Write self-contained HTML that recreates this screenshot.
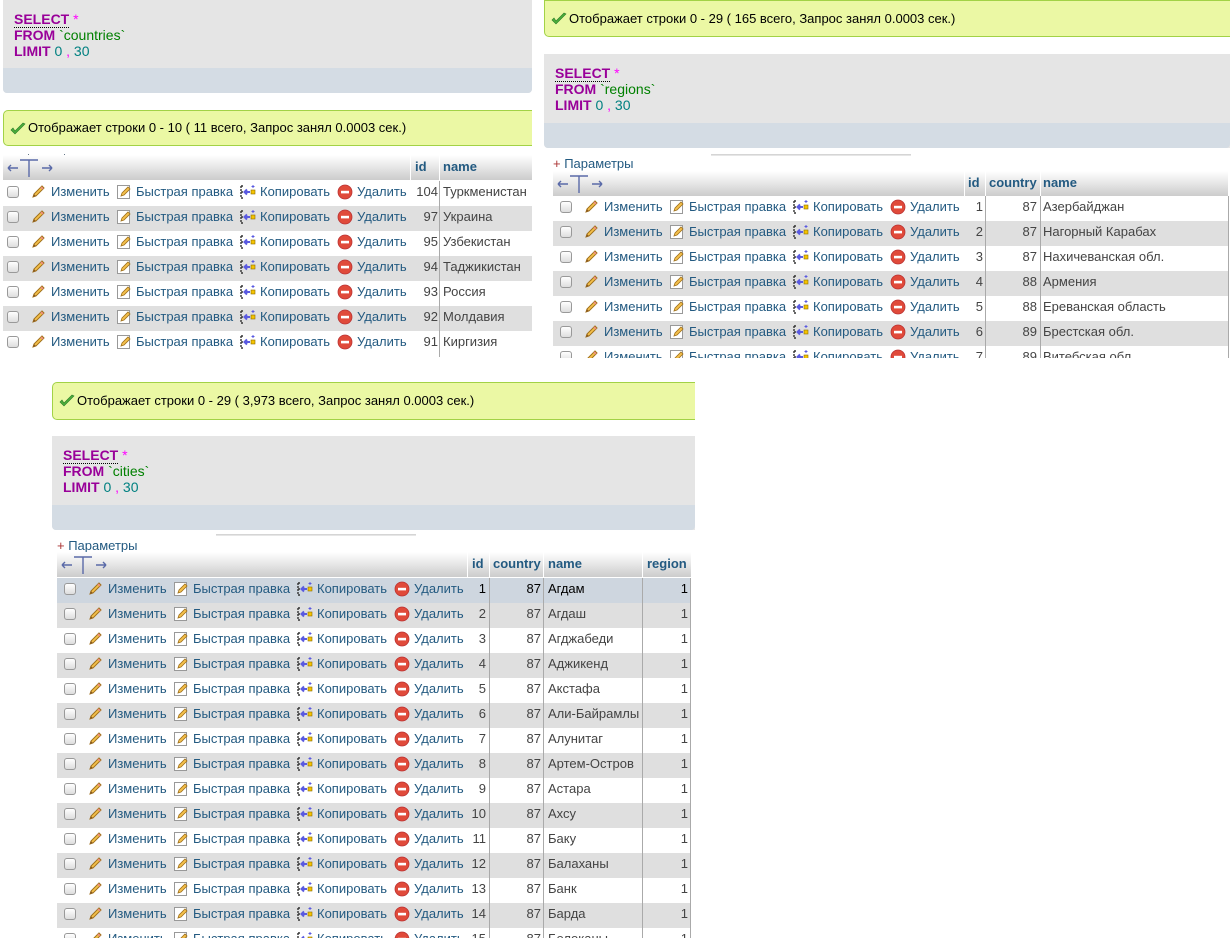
<!DOCTYPE html>
<html><head><meta charset="utf-8">
<style>
*{margin:0;padding:0;box-sizing:border-box}
body{width:1230px;height:938px;position:relative;overflow:hidden;background:#fff;font-family:"Liberation Sans",sans-serif;font-size:13px;color:#444}
.abs{position:absolute}
.clip{position:absolute;overflow:hidden}
.ok{position:absolute;background:#ebf8a4;border:1px solid #a2d246;border-radius:5px;color:#000;font-size:13px;padding-left:24px;line-height:34px}
.ok svg{position:absolute;left:6px;top:11px}
.sql{position:absolute;background:#e5e5e5;border-radius:0 0 4px 4px;font-size:14px;line-height:16px}
.sql .bot{position:absolute;left:0;right:0;bottom:0;height:25px;background:#d4dce4;border-radius:0 0 4px 4px}
.kw{color:#990099;font-weight:bold}
.st{color:#ff00ff}
.tb{color:#008000}
.nu{color:#008080}
.sel{border-bottom:1px dotted #000}
.hdr{position:absolute;height:25px;background:linear-gradient(#fff,#ccc)}
.hdr b{position:absolute;top:4px;color:#235a81;font-weight:bold}
.hdr .sep{position:absolute;top:0;bottom:0;width:1px;background:#fff}
.arr{position:absolute;left:3px;top:2px}
.row{position:absolute;height:25px;line-height:25px;white-space:nowrap}
.row.g{background:#dfdfdf}
.row.h{background:#ced6df}
.row span{position:absolute;top:-2px}
.lk{color:#235a81}
.cb{position:absolute;top:5px;width:12px;height:12px;border:1px solid #999;border-radius:3px;background:linear-gradient(#fff,#ddd)}
.row svg{position:absolute;top:3px}
.vl{position:absolute;top:0;bottom:0;width:1px;background:#aaa}
.num{text-align:right}
.par{position:absolute;color:#235a81}
.par i{color:#a33;font-style:normal}
.line{position:absolute;height:2px;background:linear-gradient(#ccc,#eee)}
</style></head><body>
<svg width="0" height="0" style="position:absolute">
<defs>
<symbol id="pen" viewBox="0 0 16 16"><path d="M3 13 L4 10 L12 2 L14 4 L6 12 Z" fill="#f4c04c" stroke="#a0701a" stroke-width="1"/><path d="M3 13 L4 10 L6 12 Z" fill="#8a5a20"/><path d="M11 3 L13 5" stroke="#e88" stroke-width="1.5"/></symbol>
<symbol id="qe" viewBox="0 0 16 16"><rect x="1.5" y="1.5" width="12" height="13" fill="#fff" stroke="#999"/><path d="M5 12 L6 9 L12 3 L14 5 L8 11 Z" fill="#f4c04c" stroke="#a0701a" stroke-width=".8"/></symbol>
<symbol id="cp" viewBox="0 0 16 16"><path d="M1 2 H4 M1 2 V14 H4 M1 8 H3" stroke="#333" stroke-width="1.4" fill="none" stroke-dasharray="2 1"/><path d="M10 8 H5 M7 5.5 L4.5 8 L7 10.5" stroke="#5a5ae0" stroke-width="2" fill="none"/><rect x="11" y="6" width="4" height="4" fill="#f5c400" stroke="#8a6a00" stroke-width=".6"/><path d="M13 1 V4 M11.5 2.5 H14.5" stroke="#5a5ae0" stroke-width="1"/></symbol>
<symbol id="dl" viewBox="0 0 16 16"><circle cx="8" cy="8" r="7" fill="#e04a3a" stroke="#b33" stroke-width=".8"/><rect x="4" y="6.8" width="8" height="2.6" fill="#fff"/></symbol>
<symbol id="ck" viewBox="0 0 16 14"><path d="M1 8 L5 12 L15 2 L13 1 L5 9 L3 6 Z" fill="#4caf3a" stroke="#2a7a2a" stroke-width=".6"/></symbol>
<symbol id="ar" viewBox="0 0 48 22"><path d="M2 11 H12 M2 11 L5 8 M2 11 L5 14 M36 11 H46 M46 11 L43 8 M46 11 L43 14 M14 3 H32 M23 3 V20" stroke="#5a6aa8" stroke-width="1.4" fill="none"/></symbol>
</defs></svg>

<!-- ================= PANEL A (countries) ================= -->
<div class="sql" style="left:3px;top:0;width:529px;height:93px;padding:11px 0 0 11px"><div class="bot"></div>
<div style="position:relative"><span class="kw sel">SELECT</span> <span class="st">*</span><br><span class="kw">FROM</span> <span class="tb">`countries`</span><br><span class="kw">LIMIT</span> <span class="nu">0</span> <span class="st">,</span> <span class="nu">30</span></div></div>
<div class="ok" style="left:3px;top:110px;width:540px;height:36px"><svg width="16" height="14"><use href="#ck"/></svg>Отображает строки 0 - 10 ( 11 всего, Запрос занял 0.0003 сек.)</div>
<div class="abs" style="left:28px;top:154px;width:1px;height:4px;background:#678"></div>
<div class="abs" style="left:64px;top:154px;width:1px;height:4px;background:#678"></div>
<div class="hdr" style="left:3px;top:155px;width:529px"><svg class="arr" width="48" height="22"><use href="#ar"/></svg>
<div class="sep" style="left:407px"></div><b style="left:412px">id</b><div class="sep" style="left:436px"></div><b style="left:440px">name</b></div>
<div class="clip" style="left:3px;top:181px;width:529px;height:176px">
<div class="row" style="top:0;width:529px"><div class="cb" style="left:4px"></div><svg style="left:27px" width="16" height="16"><use href="#pen"/></svg><span class="lk" style="left:48px">Изменить</span><svg style="left:113px" width="16" height="16"><use href="#qe"/></svg><span class="lk" style="left:133px">Быстрая правка</span><svg style="left:237px" width="16" height="16"><use href="#cp"/></svg><span class="lk" style="left:257px">Копировать</span><svg style="left:334px" width="16" height="16"><use href="#dl"/></svg><span class="lk" style="left:354px">Удалить</span><span class="num" style="left:408px;width:27px">104</span><span style="left:440px">Туркменистан</span></div>
<div class="row g" style="top:25px;width:529px"><div class="cb" style="left:4px"></div><svg style="left:27px" width="16" height="16"><use href="#pen"/></svg><span class="lk" style="left:48px">Изменить</span><svg style="left:113px" width="16" height="16"><use href="#qe"/></svg><span class="lk" style="left:133px">Быстрая правка</span><svg style="left:237px" width="16" height="16"><use href="#cp"/></svg><span class="lk" style="left:257px">Копировать</span><svg style="left:334px" width="16" height="16"><use href="#dl"/></svg><span class="lk" style="left:354px">Удалить</span><span class="num" style="left:408px;width:27px">97</span><span style="left:440px">Украина</span></div>
<div class="row" style="top:50px;width:529px"><div class="cb" style="left:4px"></div><svg style="left:27px" width="16" height="16"><use href="#pen"/></svg><span class="lk" style="left:48px">Изменить</span><svg style="left:113px" width="16" height="16"><use href="#qe"/></svg><span class="lk" style="left:133px">Быстрая правка</span><svg style="left:237px" width="16" height="16"><use href="#cp"/></svg><span class="lk" style="left:257px">Копировать</span><svg style="left:334px" width="16" height="16"><use href="#dl"/></svg><span class="lk" style="left:354px">Удалить</span><span class="num" style="left:408px;width:27px">95</span><span style="left:440px">Узбекистан</span></div>
<div class="row g" style="top:75px;width:529px"><div class="cb" style="left:4px"></div><svg style="left:27px" width="16" height="16"><use href="#pen"/></svg><span class="lk" style="left:48px">Изменить</span><svg style="left:113px" width="16" height="16"><use href="#qe"/></svg><span class="lk" style="left:133px">Быстрая правка</span><svg style="left:237px" width="16" height="16"><use href="#cp"/></svg><span class="lk" style="left:257px">Копировать</span><svg style="left:334px" width="16" height="16"><use href="#dl"/></svg><span class="lk" style="left:354px">Удалить</span><span class="num" style="left:408px;width:27px">94</span><span style="left:440px">Таджикистан</span></div>
<div class="row" style="top:100px;width:529px"><div class="cb" style="left:4px"></div><svg style="left:27px" width="16" height="16"><use href="#pen"/></svg><span class="lk" style="left:48px">Изменить</span><svg style="left:113px" width="16" height="16"><use href="#qe"/></svg><span class="lk" style="left:133px">Быстрая правка</span><svg style="left:237px" width="16" height="16"><use href="#cp"/></svg><span class="lk" style="left:257px">Копировать</span><svg style="left:334px" width="16" height="16"><use href="#dl"/></svg><span class="lk" style="left:354px">Удалить</span><span class="num" style="left:408px;width:27px">93</span><span style="left:440px">Россия</span></div>
<div class="row g" style="top:125px;width:529px"><div class="cb" style="left:4px"></div><svg style="left:27px" width="16" height="16"><use href="#pen"/></svg><span class="lk" style="left:48px">Изменить</span><svg style="left:113px" width="16" height="16"><use href="#qe"/></svg><span class="lk" style="left:133px">Быстрая правка</span><svg style="left:237px" width="16" height="16"><use href="#cp"/></svg><span class="lk" style="left:257px">Копировать</span><svg style="left:334px" width="16" height="16"><use href="#dl"/></svg><span class="lk" style="left:354px">Удалить</span><span class="num" style="left:408px;width:27px">92</span><span style="left:440px">Молдавия</span></div>
<div class="row" style="top:150px;width:529px"><div class="cb" style="left:4px"></div><svg style="left:27px" width="16" height="16"><use href="#pen"/></svg><span class="lk" style="left:48px">Изменить</span><svg style="left:113px" width="16" height="16"><use href="#qe"/></svg><span class="lk" style="left:133px">Быстрая правка</span><svg style="left:237px" width="16" height="16"><use href="#cp"/></svg><span class="lk" style="left:257px">Копировать</span><svg style="left:334px" width="16" height="16"><use href="#dl"/></svg><span class="lk" style="left:354px">Удалить</span><span class="num" style="left:408px;width:27px">91</span><span style="left:440px">Киргизия</span></div>
<div class="vl" style="left:436px;top:0;height:176px"></div>
</div>
<div class="abs" style="left:532px;top:0;width:12px;height:360px;background:#fff"></div>

<!-- ================= PANEL B (regions) ================= -->
<div class="ok" style="left:544px;top:0;width:690px;height:37px;border-radius:0 0 0 5px;line-height:35px"><svg width="16" height="14"><use href="#ck"/></svg>Отображает строки 0 - 29 ( 165 всего, Запрос занял 0.0003 сек.)</div>
<div class="sql" style="left:544px;top:54px;width:686px;height:94px;padding:11px 0 0 11px;border-radius:0 0 0 4px"><div class="bot"></div>
<div style="position:relative"><span class="kw sel">SELECT</span> <span class="st">*</span><br><span class="kw">FROM</span> <span class="tb">`regions`</span><br><span class="kw">LIMIT</span> <span class="nu">0</span> <span class="st">,</span> <span class="nu">30</span></div></div>
<div class="line" style="left:711px;top:154px;width:200px"></div>
<div class="par" style="left:553px;top:156px"><i>+</i> Параметры</div>
<div class="hdr" style="left:553px;top:171px;width:675px"><svg class="arr" width="48" height="22"><use href="#ar"/></svg>
<div class="sep" style="left:411px"></div><b style="left:415px">id</b><div class="sep" style="left:432px"></div><b style="left:436px">country</b><div class="sep" style="left:487px"></div><b style="left:490px">name</b></div>
<div class="clip" style="left:553px;top:196px;width:676px;height:162px">
<div class="row" style="top:0;width:676px"><div class="cb" style="left:7px"></div><svg style="left:30px" width="16" height="16"><use href="#pen"/></svg><span class="lk" style="left:51px">Изменить</span><svg style="left:116px" width="16" height="16"><use href="#qe"/></svg><span class="lk" style="left:136px">Быстрая правка</span><svg style="left:240px" width="16" height="16"><use href="#cp"/></svg><span class="lk" style="left:260px">Копировать</span><svg style="left:337px" width="16" height="16"><use href="#dl"/></svg><span class="lk" style="left:357px">Удалить</span><span class="num" style="left:412px;width:18px">1</span><span class="num" style="left:433px;width:51px">87</span><span style="left:490px">Азербайджан</span></div>
<div class="row g" style="top:25px;width:676px"><div class="cb" style="left:7px"></div><svg style="left:30px" width="16" height="16"><use href="#pen"/></svg><span class="lk" style="left:51px">Изменить</span><svg style="left:116px" width="16" height="16"><use href="#qe"/></svg><span class="lk" style="left:136px">Быстрая правка</span><svg style="left:240px" width="16" height="16"><use href="#cp"/></svg><span class="lk" style="left:260px">Копировать</span><svg style="left:337px" width="16" height="16"><use href="#dl"/></svg><span class="lk" style="left:357px">Удалить</span><span class="num" style="left:412px;width:18px">2</span><span class="num" style="left:433px;width:51px">87</span><span style="left:490px">Нагорный Карабах</span></div>
<div class="row" style="top:50px;width:676px"><div class="cb" style="left:7px"></div><svg style="left:30px" width="16" height="16"><use href="#pen"/></svg><span class="lk" style="left:51px">Изменить</span><svg style="left:116px" width="16" height="16"><use href="#qe"/></svg><span class="lk" style="left:136px">Быстрая правка</span><svg style="left:240px" width="16" height="16"><use href="#cp"/></svg><span class="lk" style="left:260px">Копировать</span><svg style="left:337px" width="16" height="16"><use href="#dl"/></svg><span class="lk" style="left:357px">Удалить</span><span class="num" style="left:412px;width:18px">3</span><span class="num" style="left:433px;width:51px">87</span><span style="left:490px">Нахичеванская обл.</span></div>
<div class="row g" style="top:75px;width:676px"><div class="cb" style="left:7px"></div><svg style="left:30px" width="16" height="16"><use href="#pen"/></svg><span class="lk" style="left:51px">Изменить</span><svg style="left:116px" width="16" height="16"><use href="#qe"/></svg><span class="lk" style="left:136px">Быстрая правка</span><svg style="left:240px" width="16" height="16"><use href="#cp"/></svg><span class="lk" style="left:260px">Копировать</span><svg style="left:337px" width="16" height="16"><use href="#dl"/></svg><span class="lk" style="left:357px">Удалить</span><span class="num" style="left:412px;width:18px">4</span><span class="num" style="left:433px;width:51px">88</span><span style="left:490px">Армения</span></div>
<div class="row" style="top:100px;width:676px"><div class="cb" style="left:7px"></div><svg style="left:30px" width="16" height="16"><use href="#pen"/></svg><span class="lk" style="left:51px">Изменить</span><svg style="left:116px" width="16" height="16"><use href="#qe"/></svg><span class="lk" style="left:136px">Быстрая правка</span><svg style="left:240px" width="16" height="16"><use href="#cp"/></svg><span class="lk" style="left:260px">Копировать</span><svg style="left:337px" width="16" height="16"><use href="#dl"/></svg><span class="lk" style="left:357px">Удалить</span><span class="num" style="left:412px;width:18px">5</span><span class="num" style="left:433px;width:51px">88</span><span style="left:490px">Ереванская область</span></div>
<div class="row g" style="top:125px;width:676px"><div class="cb" style="left:7px"></div><svg style="left:30px" width="16" height="16"><use href="#pen"/></svg><span class="lk" style="left:51px">Изменить</span><svg style="left:116px" width="16" height="16"><use href="#qe"/></svg><span class="lk" style="left:136px">Быстрая правка</span><svg style="left:240px" width="16" height="16"><use href="#cp"/></svg><span class="lk" style="left:260px">Копировать</span><svg style="left:337px" width="16" height="16"><use href="#dl"/></svg><span class="lk" style="left:357px">Удалить</span><span class="num" style="left:412px;width:18px">6</span><span class="num" style="left:433px;width:51px">89</span><span style="left:490px">Брестская обл.</span></div>
<div class="row" style="top:150px;width:676px"><div class="cb" style="left:7px"></div><svg style="left:30px" width="16" height="16"><use href="#pen"/></svg><span class="lk" style="left:51px">Изменить</span><svg style="left:116px" width="16" height="16"><use href="#qe"/></svg><span class="lk" style="left:136px">Быстрая правка</span><svg style="left:240px" width="16" height="16"><use href="#cp"/></svg><span class="lk" style="left:260px">Копировать</span><svg style="left:337px" width="16" height="16"><use href="#dl"/></svg><span class="lk" style="left:357px">Удалить</span><span class="num" style="left:412px;width:18px">7</span><span class="num" style="left:433px;width:51px">89</span><span style="left:490px">Витебская обл.</span></div>
<div class="vl" style="left:432px"></div><div class="vl" style="left:487px"></div><div class="vl" style="left:675px"></div>
</div>

<!-- ================= PANEL C (cities) ================= -->
<div class="ok" style="left:52px;top:382px;width:643px;height:38px;border-right:none;border-radius:5px 0 0 5px;line-height:36px"><svg width="16" height="14"><use href="#ck"/></svg>Отображает строки 0 - 29 ( 3,973 всего, Запрос занял 0.0003 сек.)</div>
<div class="sql" style="left:52px;top:436px;width:643px;height:94px;padding:11px 0 0 11px;border-radius:0 0 0 4px"><div class="bot"></div>
<div style="position:relative"><span class="kw sel">SELECT</span> <span class="st">*</span><br><span class="kw">FROM</span> <span class="tb">`cities`</span><br><span class="kw">LIMIT</span> <span class="nu">0</span> <span class="st">,</span> <span class="nu">30</span></div></div>
<div class="line" style="left:216px;top:534px;width:200px"></div>
<div class="par" style="left:57px;top:538px"><i>+</i> Параметры</div>
<div class="hdr" style="left:57px;top:552px;width:634px"><svg class="arr" width="48" height="22"><use href="#ar"/></svg>
<div class="sep" style="left:410px"></div><b style="left:415px">id</b><div class="sep" style="left:432px"></div><b style="left:436px">country</b><div class="sep" style="left:486px"></div><b style="left:491px">name</b><div class="sep" style="left:585px"></div><b style="left:590px">region</b></div>
<div class="clip" style="left:57px;top:578px;width:634px;height:360px">
<div class="row h" style="top:0;width:634px"><div class="cb" style="left:7px"></div><svg style="left:30px" width="16" height="16"><use href="#pen"/></svg><span class="lk" style="left:51px">Изменить</span><svg style="left:116px" width="16" height="16"><use href="#qe"/></svg><span class="lk" style="left:136px">Быстрая правка</span><svg style="left:240px" width="16" height="16"><use href="#cp"/></svg><span class="lk" style="left:260px">Копировать</span><svg style="left:337px" width="16" height="16"><use href="#dl"/></svg><span class="lk" style="left:357px">Удалить</span><span class="num" style="left:411px;width:18px;color:#000">1</span><span class="num" style="left:433px;width:51px;color:#000">87</span><span style="left:491px;color:#000">Агдам</span><span class="num" style="left:586px;width:45px;color:#000">1</span></div>
<div class="row g" style="top:25px;width:634px"><div class="cb" style="left:7px"></div><svg style="left:30px" width="16" height="16"><use href="#pen"/></svg><span class="lk" style="left:51px">Изменить</span><svg style="left:116px" width="16" height="16"><use href="#qe"/></svg><span class="lk" style="left:136px">Быстрая правка</span><svg style="left:240px" width="16" height="16"><use href="#cp"/></svg><span class="lk" style="left:260px">Копировать</span><svg style="left:337px" width="16" height="16"><use href="#dl"/></svg><span class="lk" style="left:357px">Удалить</span><span class="num" style="left:411px;width:18px">2</span><span class="num" style="left:433px;width:51px">87</span><span style="left:491px">Агдаш</span><span class="num" style="left:586px;width:45px">1</span></div>
<div class="row" style="top:50px;width:634px"><div class="cb" style="left:7px"></div><svg style="left:30px" width="16" height="16"><use href="#pen"/></svg><span class="lk" style="left:51px">Изменить</span><svg style="left:116px" width="16" height="16"><use href="#qe"/></svg><span class="lk" style="left:136px">Быстрая правка</span><svg style="left:240px" width="16" height="16"><use href="#cp"/></svg><span class="lk" style="left:260px">Копировать</span><svg style="left:337px" width="16" height="16"><use href="#dl"/></svg><span class="lk" style="left:357px">Удалить</span><span class="num" style="left:411px;width:18px">3</span><span class="num" style="left:433px;width:51px">87</span><span style="left:491px">Агджабеди</span><span class="num" style="left:586px;width:45px">1</span></div>
<div class="row g" style="top:75px;width:634px"><div class="cb" style="left:7px"></div><svg style="left:30px" width="16" height="16"><use href="#pen"/></svg><span class="lk" style="left:51px">Изменить</span><svg style="left:116px" width="16" height="16"><use href="#qe"/></svg><span class="lk" style="left:136px">Быстрая правка</span><svg style="left:240px" width="16" height="16"><use href="#cp"/></svg><span class="lk" style="left:260px">Копировать</span><svg style="left:337px" width="16" height="16"><use href="#dl"/></svg><span class="lk" style="left:357px">Удалить</span><span class="num" style="left:411px;width:18px">4</span><span class="num" style="left:433px;width:51px">87</span><span style="left:491px">Аджикенд</span><span class="num" style="left:586px;width:45px">1</span></div>
<div class="row" style="top:100px;width:634px"><div class="cb" style="left:7px"></div><svg style="left:30px" width="16" height="16"><use href="#pen"/></svg><span class="lk" style="left:51px">Изменить</span><svg style="left:116px" width="16" height="16"><use href="#qe"/></svg><span class="lk" style="left:136px">Быстрая правка</span><svg style="left:240px" width="16" height="16"><use href="#cp"/></svg><span class="lk" style="left:260px">Копировать</span><svg style="left:337px" width="16" height="16"><use href="#dl"/></svg><span class="lk" style="left:357px">Удалить</span><span class="num" style="left:411px;width:18px">5</span><span class="num" style="left:433px;width:51px">87</span><span style="left:491px">Акстафа</span><span class="num" style="left:586px;width:45px">1</span></div>
<div class="row g" style="top:125px;width:634px"><div class="cb" style="left:7px"></div><svg style="left:30px" width="16" height="16"><use href="#pen"/></svg><span class="lk" style="left:51px">Изменить</span><svg style="left:116px" width="16" height="16"><use href="#qe"/></svg><span class="lk" style="left:136px">Быстрая правка</span><svg style="left:240px" width="16" height="16"><use href="#cp"/></svg><span class="lk" style="left:260px">Копировать</span><svg style="left:337px" width="16" height="16"><use href="#dl"/></svg><span class="lk" style="left:357px">Удалить</span><span class="num" style="left:411px;width:18px">6</span><span class="num" style="left:433px;width:51px">87</span><span style="left:491px">Али-Байрамлы</span><span class="num" style="left:586px;width:45px">1</span></div>
<div class="row" style="top:150px;width:634px"><div class="cb" style="left:7px"></div><svg style="left:30px" width="16" height="16"><use href="#pen"/></svg><span class="lk" style="left:51px">Изменить</span><svg style="left:116px" width="16" height="16"><use href="#qe"/></svg><span class="lk" style="left:136px">Быстрая правка</span><svg style="left:240px" width="16" height="16"><use href="#cp"/></svg><span class="lk" style="left:260px">Копировать</span><svg style="left:337px" width="16" height="16"><use href="#dl"/></svg><span class="lk" style="left:357px">Удалить</span><span class="num" style="left:411px;width:18px">7</span><span class="num" style="left:433px;width:51px">87</span><span style="left:491px">Алунитаг</span><span class="num" style="left:586px;width:45px">1</span></div>
<div class="row g" style="top:175px;width:634px"><div class="cb" style="left:7px"></div><svg style="left:30px" width="16" height="16"><use href="#pen"/></svg><span class="lk" style="left:51px">Изменить</span><svg style="left:116px" width="16" height="16"><use href="#qe"/></svg><span class="lk" style="left:136px">Быстрая правка</span><svg style="left:240px" width="16" height="16"><use href="#cp"/></svg><span class="lk" style="left:260px">Копировать</span><svg style="left:337px" width="16" height="16"><use href="#dl"/></svg><span class="lk" style="left:357px">Удалить</span><span class="num" style="left:411px;width:18px">8</span><span class="num" style="left:433px;width:51px">87</span><span style="left:491px">Артем-Остров</span><span class="num" style="left:586px;width:45px">1</span></div>
<div class="row" style="top:200px;width:634px"><div class="cb" style="left:7px"></div><svg style="left:30px" width="16" height="16"><use href="#pen"/></svg><span class="lk" style="left:51px">Изменить</span><svg style="left:116px" width="16" height="16"><use href="#qe"/></svg><span class="lk" style="left:136px">Быстрая правка</span><svg style="left:240px" width="16" height="16"><use href="#cp"/></svg><span class="lk" style="left:260px">Копировать</span><svg style="left:337px" width="16" height="16"><use href="#dl"/></svg><span class="lk" style="left:357px">Удалить</span><span class="num" style="left:411px;width:18px">9</span><span class="num" style="left:433px;width:51px">87</span><span style="left:491px">Астара</span><span class="num" style="left:586px;width:45px">1</span></div>
<div class="row g" style="top:225px;width:634px"><div class="cb" style="left:7px"></div><svg style="left:30px" width="16" height="16"><use href="#pen"/></svg><span class="lk" style="left:51px">Изменить</span><svg style="left:116px" width="16" height="16"><use href="#qe"/></svg><span class="lk" style="left:136px">Быстрая правка</span><svg style="left:240px" width="16" height="16"><use href="#cp"/></svg><span class="lk" style="left:260px">Копировать</span><svg style="left:337px" width="16" height="16"><use href="#dl"/></svg><span class="lk" style="left:357px">Удалить</span><span class="num" style="left:411px;width:18px">10</span><span class="num" style="left:433px;width:51px">87</span><span style="left:491px">Ахсу</span><span class="num" style="left:586px;width:45px">1</span></div>
<div class="row" style="top:250px;width:634px"><div class="cb" style="left:7px"></div><svg style="left:30px" width="16" height="16"><use href="#pen"/></svg><span class="lk" style="left:51px">Изменить</span><svg style="left:116px" width="16" height="16"><use href="#qe"/></svg><span class="lk" style="left:136px">Быстрая правка</span><svg style="left:240px" width="16" height="16"><use href="#cp"/></svg><span class="lk" style="left:260px">Копировать</span><svg style="left:337px" width="16" height="16"><use href="#dl"/></svg><span class="lk" style="left:357px">Удалить</span><span class="num" style="left:411px;width:18px">11</span><span class="num" style="left:433px;width:51px">87</span><span style="left:491px">Баку</span><span class="num" style="left:586px;width:45px">1</span></div>
<div class="row g" style="top:275px;width:634px"><div class="cb" style="left:7px"></div><svg style="left:30px" width="16" height="16"><use href="#pen"/></svg><span class="lk" style="left:51px">Изменить</span><svg style="left:116px" width="16" height="16"><use href="#qe"/></svg><span class="lk" style="left:136px">Быстрая правка</span><svg style="left:240px" width="16" height="16"><use href="#cp"/></svg><span class="lk" style="left:260px">Копировать</span><svg style="left:337px" width="16" height="16"><use href="#dl"/></svg><span class="lk" style="left:357px">Удалить</span><span class="num" style="left:411px;width:18px">12</span><span class="num" style="left:433px;width:51px">87</span><span style="left:491px">Балаханы</span><span class="num" style="left:586px;width:45px">1</span></div>
<div class="row" style="top:300px;width:634px"><div class="cb" style="left:7px"></div><svg style="left:30px" width="16" height="16"><use href="#pen"/></svg><span class="lk" style="left:51px">Изменить</span><svg style="left:116px" width="16" height="16"><use href="#qe"/></svg><span class="lk" style="left:136px">Быстрая правка</span><svg style="left:240px" width="16" height="16"><use href="#cp"/></svg><span class="lk" style="left:260px">Копировать</span><svg style="left:337px" width="16" height="16"><use href="#dl"/></svg><span class="lk" style="left:357px">Удалить</span><span class="num" style="left:411px;width:18px">13</span><span class="num" style="left:433px;width:51px">87</span><span style="left:491px">Банк</span><span class="num" style="left:586px;width:45px">1</span></div>
<div class="row g" style="top:325px;width:634px"><div class="cb" style="left:7px"></div><svg style="left:30px" width="16" height="16"><use href="#pen"/></svg><span class="lk" style="left:51px">Изменить</span><svg style="left:116px" width="16" height="16"><use href="#qe"/></svg><span class="lk" style="left:136px">Быстрая правка</span><svg style="left:240px" width="16" height="16"><use href="#cp"/></svg><span class="lk" style="left:260px">Копировать</span><svg style="left:337px" width="16" height="16"><use href="#dl"/></svg><span class="lk" style="left:357px">Удалить</span><span class="num" style="left:411px;width:18px">14</span><span class="num" style="left:433px;width:51px">87</span><span style="left:491px">Барда</span><span class="num" style="left:586px;width:45px">1</span></div>
<div class="row" style="top:350px;width:634px"><div class="cb" style="left:7px"></div><svg style="left:30px" width="16" height="16"><use href="#pen"/></svg><span class="lk" style="left:51px">Изменить</span><svg style="left:116px" width="16" height="16"><use href="#qe"/></svg><span class="lk" style="left:136px">Быстрая правка</span><svg style="left:240px" width="16" height="16"><use href="#cp"/></svg><span class="lk" style="left:260px">Копировать</span><svg style="left:337px" width="16" height="16"><use href="#dl"/></svg><span class="lk" style="left:357px">Удалить</span><span class="num" style="left:411px;width:18px">15</span><span class="num" style="left:433px;width:51px">87</span><span style="left:491px">Белоканы</span><span class="num" style="left:586px;width:45px">1</span></div>
<div class="vl" style="left:432px"></div><div class="vl" style="left:486px"></div><div class="vl" style="left:585px"></div><div class="vl" style="left:633px"></div>
</div>
</body></html>
